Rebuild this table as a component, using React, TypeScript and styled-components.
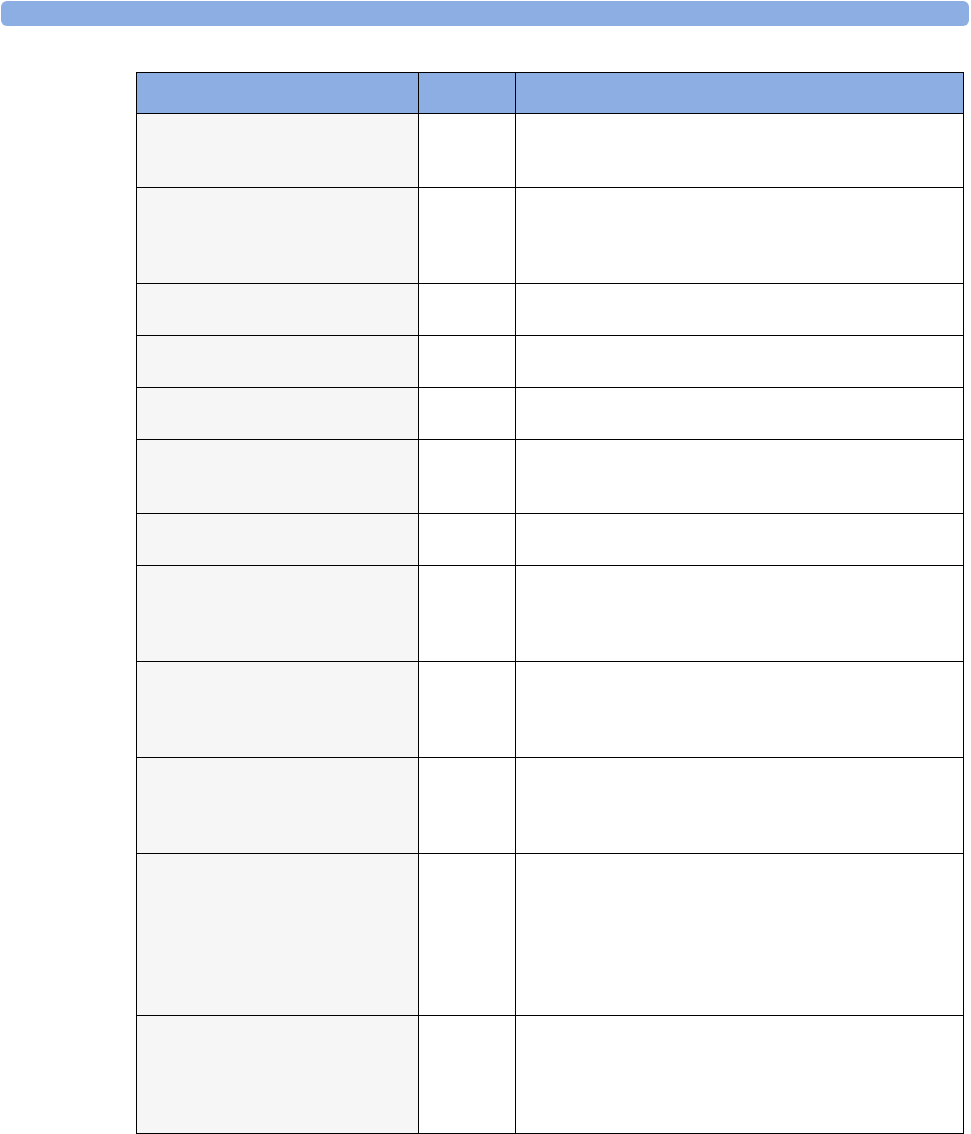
import styled, { createGlobalStyle } from 'styled-components';

const GlobalStyle = createGlobalStyle`
  html, body {
    margin: 0;
    padding: 0;
    background: #ffffff;
    font-family: 'Liberation Sans', Arial, sans-serif;
  }
`;

const Page = styled.div`
  width: 971px;
  min-height: 1134px;
  padding-top: 1px;
`;

const TopBar = styled.div`
  margin: 0 2px 0 1px;
  height: 25px;
  background: #8caee2;
  border-radius: 6px;
`;

const Table = styled.div`
  margin: 46px 0 0 136px;
  width: 827px;
  border-left: 1px solid #000;
  border-top: 1px solid #000;
  display: flex;
  flex-direction: column;
`;

const Row = styled.div<{ $h: number }>`
  display: grid;
  grid-template-columns: 282px 97px 448px;
  height: ${(p) => p.$h}px;
`;

const Cell = styled.div<{ $header?: boolean; $shaded?: boolean }>`
  border-right: 1px solid #000;
  border-bottom: 1px solid #000;
  background: ${(p) => (p.$header ? '#8caee2' : p.$shaded ? '#f6f6f6' : '#ffffff')};
  font-size: 13px;
  color: #000;
  padding: 6px 8px;
`;

// row heights measured line to line
const rows = [74, 96, 52, 52, 52, 74, 52, 96, 96, 96, 162, 118];

const App = () => {
  return (
    <Page>
      <GlobalStyle />
      <TopBar />
      <Table>
        <Row $h={41}>
          <Cell $header />
          <Cell $header />
          <Cell $header />
        </Row>
        {rows.map((h, i) => (
          <Row key={i} $h={h}>
            <Cell $shaded />
            <Cell />
            <Cell />
          </Row>
        ))}
      </Table>
    </Page>
  );
};

export default App;
